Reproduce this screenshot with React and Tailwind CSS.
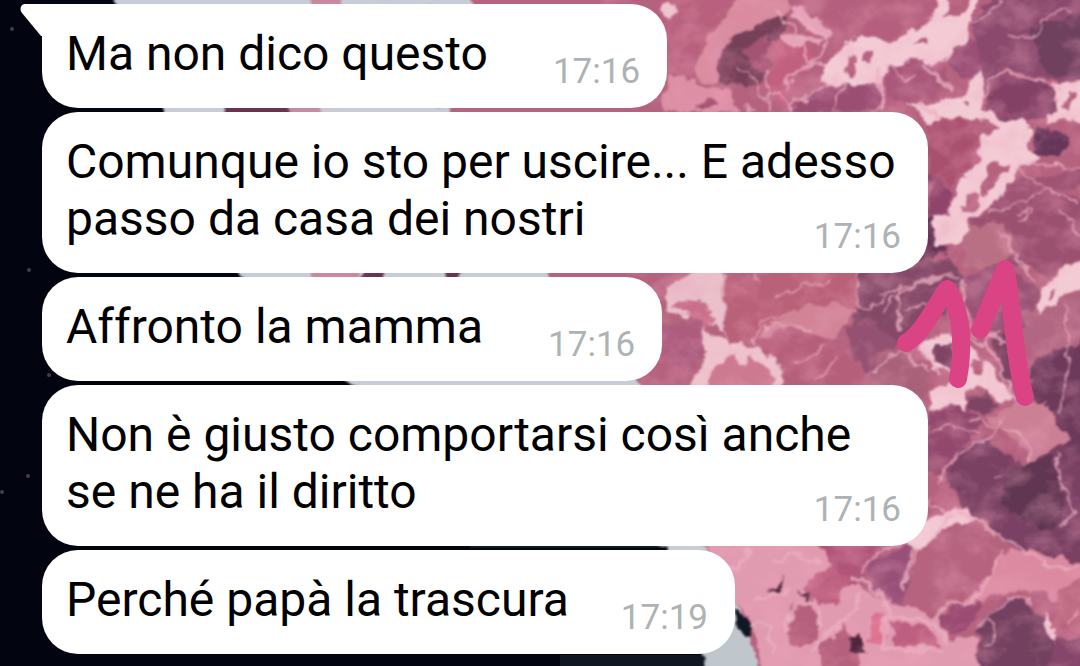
import React from "react";

const messages = [
  { id: 1, text: "Ma non dico questo", time: "17:16" },
  { id: 2, text: "Comunque io sto per uscire... E adesso passo da casa dei nostri", time: "17:16" },
  { id: 3, text: "Affronto la mamma", time: "17:16" },
  { id: 4, text: "Non è giusto comportarsi così anche se ne ha il diritto", time: "17:16" },
  { id: 5, text: "Perché papà la trascura", time: "17:19" },
];

// large flat areas of the wallpaper, back to front
const areas = [
  { fill: "#c8ccd6", d: "M100 -30H440L470 120L560 290L660 400L720 550L790 700H722L707 666L665 548L350 383L240 275L167 110Z" },
  { fill: "#b5627f", d: "M330 -30H1110V700H770L736 600L700 545L640 382L540 275L440 110Z" },
  { fill: "#6b3350", d: "M225 103H290V117H225Z M360 268H384V282H360Z M445 268H460V282H445Z" },
  { fill: "#c98a9f", d: "M290 103H322V117H290Z M310 268H358V282H310Z M310 -10H360V8H310Z" },
  { fill: "#c8ccd6", d: "M340 -10H470V8H340Z M345 103H450V117H345Z M465 268H550V282H465Z M400 375H590V390H400Z" },
  // top left folds
  { fill: "#b8607d", d: "M660 -10H745L712 34L694 82L662 74Z" },
  { fill: "#d98b9f", d: "M742 -10H784L788 14L752 28L735 36L727 55L720 84L692 82L700 54L718 24Z" },
  { fill: "#efc4cf", d: "M664 4L674 4L678 12L672 18L664 12Z" },
  { fill: "#764058", d: "M735 33L765 22L788 14L786 32L770 42L768 70L758 86L722 84L717 62Z" },
  { fill: "#a35473", d: "M740 48L768 36L769 76L756 70Z" },
  { fill: "#dd8fa5", d: "M668 74L700 86L728 90L740 112H662Z" },
  { fill: "#9a4767", d: "M694 106L718 98L716 103L700 109Z" },
  { fill: "#b35f7d", d: "M810 -10H938L926 20L890 38L852 34L824 22Z" },
  { fill: "#e6a5b8", d: "M776 36L800 34L822 42L800 44L778 44Z M788 8L806 10L832 34L822 40Z" },
  { fill: "#c1607f", d: "M772 42L810 45L816 62L792 80L784 108L770 90Z" },
  { fill: "#9a4e72", d: "M790 108L822 84L850 86L880 78L882 104L862 112H790Z" },
  { fill: "#a9587a", d: "M886 66L912 60L946 68L948 92L912 104L886 96Z" },
  { fill: "#9a5075", d: "M944 60L968 36L982 44L980 76L962 80Z" },
  { fill: "#8b4a6d", d: "M1000 -10H1100V80L1056 82L1005 70L984 96L980 44L972 24Z" },
  { fill: "#70405f", d: "M1030 28L1100 6V76L1052 78L1038 60Z" },
  { fill: "#844166", d: "M986 96L1002 74L1062 88L1056 116L1010 126L988 112Z" },
  { fill: "#a9506f", d: "M926 122L962 120L980 136L970 168L950 186L930 172Z" },
  { fill: "#8f456b", d: "M930 172L950 188L948 214L928 218Z" },
  { fill: "#66355a", d: "M1030 132L1050 126L1068 140L1062 156L1032 154Z" },
  { fill: "#9f5474", d: "M1010 180L1100 168V182L1048 192L1032 202L986 212Z" },
  { fill: "#9a506f", d: "M970 220L1000 206L1056 190L1100 206V250L1046 276L1012 262L975 250Z" },
  { fill: "#b97084", d: "M968 226L1004 222L1014 250L990 270L962 264Z" },
  { fill: "#653354", d: "M922 222L936 218L944 254L920 262Z" },
  // middle
  { fill: "#834967", d: "M860 270L950 258L966 280L940 320L896 344L850 330Z" },
  { fill: "#b4637d", d: "M662 270H725L724 340L662 352Z" },
  { fill: "#eac0cb", d: "M664 288L680 280L700 270H722L724 330L712 326L700 312L676 316L664 308Z" },
  { fill: "#c96f8b", d: "M672 308L690 298L702 300L716 320L708 330L690 312Z" },
  { fill: "#ac5d7e", d: "M664 326L704 316L708 350L688 372L664 356Z" },
  { fill: "#b96178", d: "M724 280L756 282L768 270H858L860 306L830 312L770 340H728Z" },
  { fill: "#d18496", d: "M764 328L790 312L830 304L858 308L832 338L796 344L760 338Z" },
  { fill: "#b65f7b", d: "M756 342L790 326L826 338L850 356L868 390H782L778 360Z" },
  { fill: "#945171", d: "M846 324L866 318L896 342L870 376L852 358Z" },
  { fill: "#a96179", d: "M880 352L902 344L930 372L928 396L868 384Z" },
  { fill: "#eec3cd", d: "M690 392L706 354L704 326L722 342L742 342L768 352L784 372L780 392Z" },
  { fill: "#cd7990", d: "M704 392L714 366L732 354L740 370L748 358L764 364L774 376L770 392Z" },
  { fill: "#985274", d: "M962 280L1000 262L1040 290L1030 324L1000 340L972 318Z" },
  { fill: "#b16681", d: "M1022 312L1070 296L1100 300V352L1040 360L1022 340Z" },
  { fill: "#6d3a5b", d: "M1032 360L1100 338V470L1058 452L1040 406L1026 394Z" },
  { fill: "#7d4563", d: "M932 340L954 336L960 372L936 364Z M968 398L986 390L996 406L984 416L968 408Z M994 340L1014 334L1016 390L1002 376Z" },
  // bottom
  { fill: "#91486c", d: "M930 412L962 404L984 424L962 444L936 480L926 470Z" },
  { fill: "#cc8095", d: "M986 418L1016 404L1046 404L1056 424L1072 438L1056 450L1030 464L1016 440Z" },
  { fill: "#7a4163", d: "M944 478L960 448L986 438L1026 466L1058 446L1100 460V566L1050 568L1010 544L980 520L946 500Z" },
  { fill: "#613652", d: "M1006 470L1054 454L1066 520L1044 532L1002 504Z" },
  { fill: "#b76480", d: "M928 498L950 484L966 512L938 524Z" },
  { fill: "#b5637e", d: "M880 560L900 545L948 524L986 520L1000 550L978 584L940 618L906 606L880 590Z" },
  { fill: "#985078", d: "M864 566L914 542L908 582L902 606L874 588Z" },
  { fill: "#db8aa1", d: "M1000 552L1030 550L1100 568V586L1060 604L1046 594L1010 590L978 602L968 622L960 606L990 574Z" },
  { fill: "#73415f", d: "M980 624L1004 596L1032 604L1054 636L1048 690H976Z" },
  { fill: "#bd6982", d: "M1058 590L1100 568V640L1056 622Z" },
  { fill: "#84466a", d: "M1054 640L1100 634V690H1046Z" },
  { fill: "#9b4a72", d: "M934 620L960 604L982 598L968 630L948 636Z" },
  { fill: "#e19bb0", d: "M700 540H812L852 580L880 598L936 618L950 640L975 636L980 690H768L752 620L736 602Z" },
  { fill: "#b05478", d: "M818 540H876L862 582L850 588L832 566Z" },
  { fill: "#b5617d", d: "M790 606L808 602L820 616L816 640L800 650L786 632Z M822 640L844 628L862 644L856 690H822Z" },
  { fill: "#bd5f80", d: "M806 584L832 566L852 582L834 604L812 602Z M890 622L928 628L940 646L894 646Z" },
  { fill: "#dc7190", d: "M872 618L884 612L888 640L868 644Z" },
  { fill: "#52253f", d: "M850 640L858 634L866 648L868 656L852 650Z M770 588L782 576L778 592Z M800 594L812 590L808 598Z" },
  { fill: "#111623", d: "M732 610L752 620L750 634L740 636Z" },
  { fill: "#bfc7cc", d: "M707 666L700 640L736 626L748 640L768 690H716Z" },
];

// pale connective webs with their openings
const webs = [
  "M820 86L826 64L842 46L868 35L888 42L906 34L930 18L938 -6H952L944 18L960 16L974 -6H984L968 22L966 38L952 54L936 64L912 58L890 68L880 82L858 86L840 84ZM844 72L852 78L858 64L855 54L847 60ZM863 62L872 62L873 53L864 51ZM914 45L926 45L929 37Z",
  "M908 102L922 108L940 100L962 96L976 74L982 68L984 108L1000 118L1028 122L1028 150L1040 160L1024 166L1010 184L992 206L970 222L962 246H938L934 218L950 212L954 190L966 176L980 158L976 150L984 136L1002 130L980 120L944 118L930 126L920 114ZM990 160L980 188L986 198L1008 164ZM966 194L964 214L980 206L982 196ZM960 104L966 110L970 104Z",
  "M1054 84L1100 78V118L1050 124L1048 112L1058 112ZM1066 90L1064 108L1072 112L1074 92Z",
  "M1038 300L1046 280L1064 270L1090 250V284L1066 292L1056 304L1036 314ZM1048 292L1050 300L1056 288Z",
  "M920 348L930 336L954 334L974 352L996 374L1014 396L1000 404L984 388L966 390L966 410L950 404L928 412L932 388L948 386L960 376L944 368L934 370ZM934 344L934 362L956 370L954 344ZM974 358L972 374L984 374L982 360Z",
  "M896 542L926 520L944 516L958 506L978 520L940 530L922 554Z",
  "M1044 612L1056 630L1054 642L1046 634Z",
];

const strands = [
  { w: 3, d: "M824 66L806 62L804 40L776 12 M812 64L826 42L800 18 M826 64Q796 62 786 88" },
  { w: 2, d: "M790 108Q804 92 828 86 M834 110Q836 94 846 84 M880 82L884 104L872 112 M886 64Q900 84 914 78" },
  { w: 2, d: "M736 68L758 82L768 110 M770 96Q784 84 790 112 M768 70V108 M745 108L752 112" },
  { w: 2, d: "M1000 0Q992 20 968 22 M984 98Q990 76 1006 72L1060 88 M1010 32Q1034 44 1042 26T1072 10" },
  { w: 5, d: "M924 66L950 90 M878 70L882 110 M918 106L940 116" },
  { w: 2, d: "M1026 162L1080 170 M1022 172L1046 188L1080 204 M988 214L1034 198L1048 190 M1018 214Q1044 206 1020 220 M1060 210L1080 236" },
  { w: 2, d: "M996 234Q1010 240 1012 252L1036 284 M880 294L950 276 M884 312Q896 284 958 278 M899 292V332 M904 312Q922 302 940 306" },
  { w: 2, d: "M724 276V338L732 344 M756 276L760 282 M858 274V300L870 308L900 286 M754 344Q758 320 784 314 M764 330Q784 318 812 332 M868 376L900 350L930 372" },
  { w: 2, d: "M796 366L826 346 M816 378L838 362 M776 298Q800 284 830 282" },
  { w: 3, d: "M956 330L980 344L1000 332 M966 312L974 334L1012 344 M962 280L968 308 M986 342L1000 366L1016 400 M920 350L938 372" },
  { w: 2, d: "M1064 304L1070 350L1064 380L1060 412 M1058 452Q1056 480 1068 498T1062 528 M996 480L1002 476" },
  { w: 2, d: "M938 482Q956 446 988 440L1004 418 M1004 430Q1028 430 1030 460 M970 420L996 426 M932 430Q952 420 978 436" },
  { w: 3, d: "M930 500L952 516L930 540 M914 548L902 584 M936 618Q950 598 968 604L990 578L1002 548 M960 512L1008 540L1050 566L1080 568" },
  { w: 4, d: "M852 578Q870 582 884 598L892 616L934 624L948 644 M818 650Q826 626 848 622L860 592 M786 632Q784 608 806 602T820 626 M888 616L882 648L940 652" },
  { w: 2, d: "M862 574L880 550L900 545 M902 588L918 550 M980 626L1006 596L1030 600 M990 620Q1002 636 988 646 M1080 614L1066 626" },
  { w: 3, d: "M706 558L736 570L750 550 M752 600L790 590 M770 562L800 552 M752 622L772 626L770 652 M796 556L820 562" },
];

const Wallpaper = () => (
  <svg
    className="absolute inset-0 h-full w-full"
    viewBox="0 0 1080 666"
    preserveAspectRatio="xMinYMin slice"
    aria-hidden="true"
  >
    <defs>
      <filter
        id="organic"
        filterUnits="userSpaceOnUse"
        x="0"
        y="-30"
        width="1120"
        height="730"
        colorInterpolationFilters="sRGB"
      >
        <feTurbulence type="fractalNoise" baseFrequency="0.07" numOctaves="3" seed="4" result="noise" />
        <feDisplacementMap in="SourceGraphic" in2="noise" scale="14" xChannelSelector="R" yChannelSelector="G" result="bent" />
        <feGaussianBlur in="bent" stdDeviation="1" />
      </filter>
      <filter id="grain" x="0" y="0" width="100%" height="100%" colorInterpolationFilters="sRGB">
        <feTurbulence type="fractalNoise" baseFrequency="0.03 0.04" numOctaves="4" seed="9" />
        <feColorMatrix values="0 0 0 0 0.93  0 0 0 0 0.64  0 0 0 0 0.73  3 0 0 0 -1.3" />
        <feComposite in2="SourceGraphic" operator="in" />
      </filter>
    </defs>
    <rect width="1080" height="666" fill="#02040f" />
    <path d="M470 544H664V548H470ZM560 655H707V666H560Z" fill="#101722" />
    <g fill="#3a4150">
      <circle cx="12" cy="29" r="2" />
      <circle cx="29" cy="270" r="2" />
      <circle cx="49" cy="375" r="2" />
      <circle cx="28" cy="476" r="2" />
      <circle cx="2" cy="492" r="2" />
    </g>
    <g filter="url(#organic)">
      {areas.map((area) => (
        <path key={area.d} d={area.d} fill={area.fill} />
      ))}
      <g fill="#f3cbd5" fillRule="evenodd">
        {webs.map((d) => (
          <path key={d} d={d} />
        ))}
      </g>
      <g fill="none" stroke="#ecb3c3" strokeLinecap="round" strokeLinejoin="round">
        {strands.map((strand) => (
          <path key={strand.d} d={strand.d} strokeWidth={strand.w} opacity="0.75" />
        ))}
      </g>
    </g>
    <path
      d="M600 0H1080V666H765L736 600L700 545L640 382Z"
      fill="#fff"
      filter="url(#grain)"
      opacity="0.3"
    />
  </svg>
);

// hand drawn page number
const Scribble = () => (
  <svg
    className="absolute inset-0 h-full w-full"
    viewBox="0 0 1080 666"
    preserveAspectRatio="xMinYMin slice"
    role="img"
    aria-label="11"
  >
    <g fill="none" stroke="#da4485" strokeWidth="18" strokeLinecap="round" strokeLinejoin="round">
      <path d="M906 343C922 333 930 315 947 289C958 302 966 338 958 379" />
      <path d="M980 330L1005 269C1012 290 1012 350 1025 397" />
    </g>
  </svg>
);

const Message = ({ text, time, first, last }) => (
  <li
    className={`relative flow-root w-fit max-w-[886px] bg-white pt-[21px] pr-[27px] pb-[15px] pl-6 ${
      first ? "rounded-r-[36px] rounded-bl-[36px]" : "rounded-[36px]"
    }`}
  >
    {first && (
      <svg className="absolute top-0 -left-[22px] h-8 w-6" viewBox="0 0 24 32" fill="#fff" aria-hidden="true">
        <path d="M24 0H5C1 0-1 5 2 9L21 32H24Z" />
      </svg>
    )}
    {text}
    <time
      className={`float-right mt-[26px] text-[35px] leading-[42px] text-[#adb3b5] ${last ? "ml-[52px]" : "ml-[65px]"}`}
    >
      {time}
    </time>
  </li>
);

const App = () => {
  return (
    <main className="relative min-h-screen overflow-hidden bg-[#02040f] font-['Roboto',sans-serif]">
      <Wallpaper />
      <ul className="relative flex flex-col gap-1 pt-1 pr-4 pb-3 pl-[42px] text-[48px] leading-[57px] text-black">
        {messages.map((message, index) => (
          <Message
            key={message.id}
            text={message.text}
            time={message.time}
            first={index === 0}
            last={index === messages.length - 1}
          />
        ))}
      </ul>
      <Scribble />
    </main>
  );
};

export default App;
